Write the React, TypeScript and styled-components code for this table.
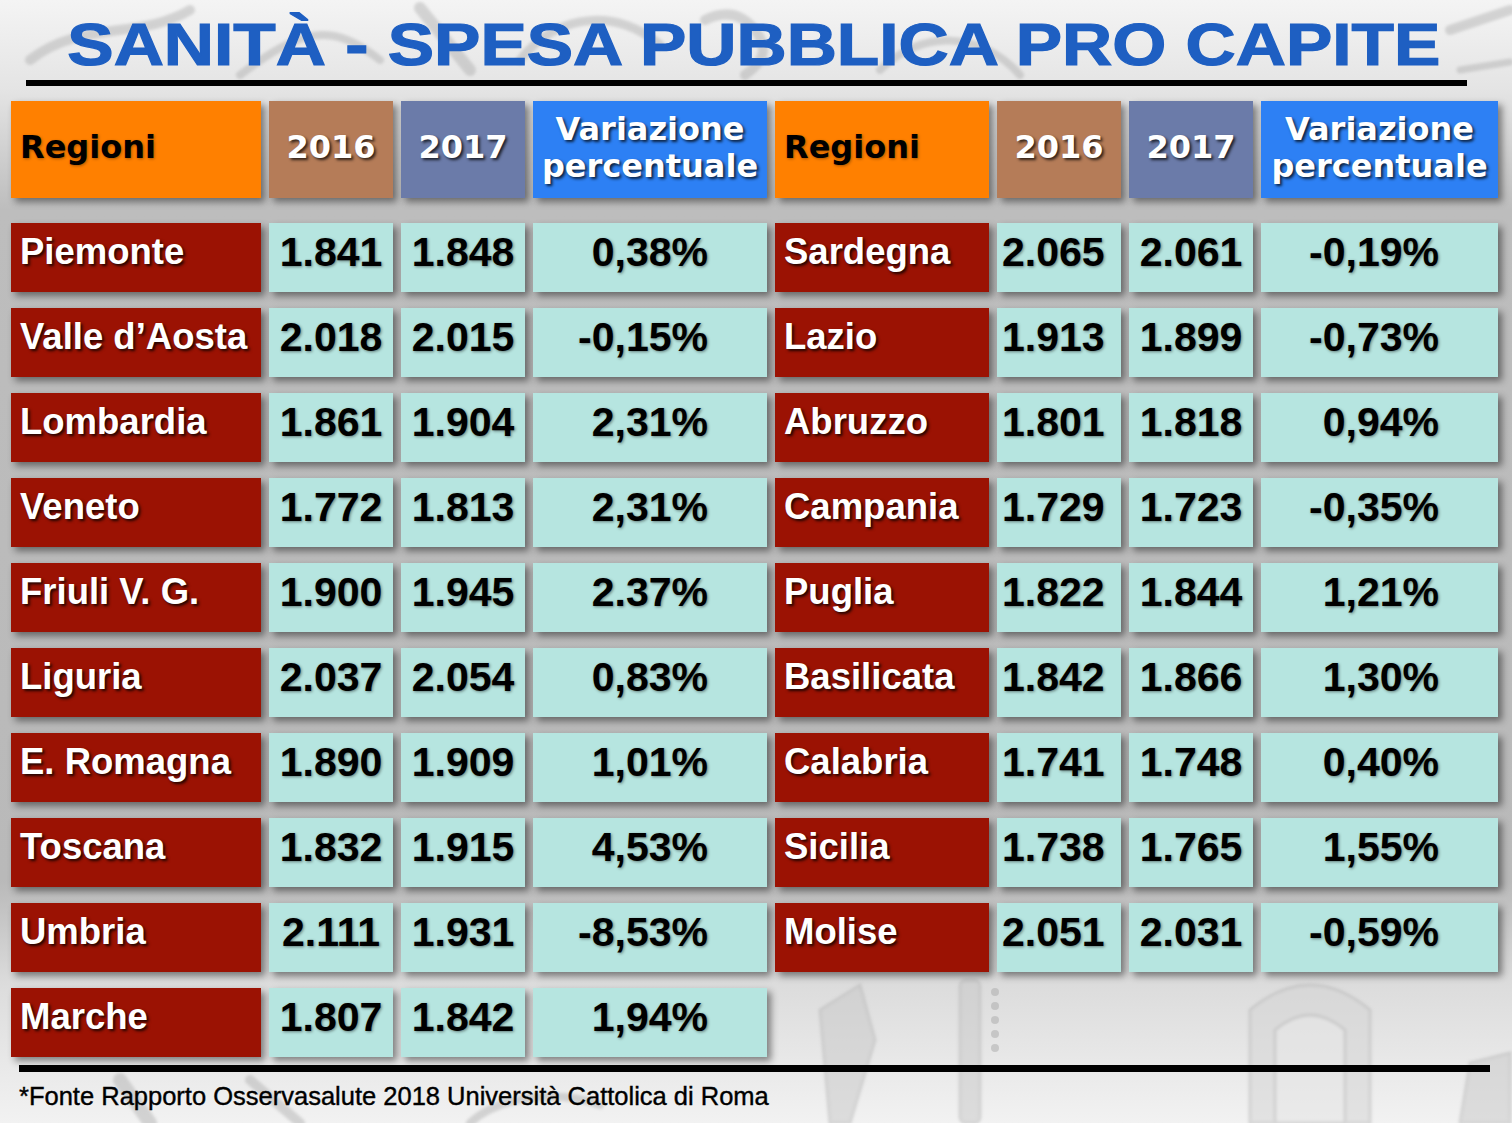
import React from "react";
import styled, { createGlobalStyle } from "styled-components";

const GlobalStyle = createGlobalStyle`
  html, body {
    margin: 0;
    padding: 0;
  }
  body {
    background: #e8e8e8;
  }
`;

const Page = styled.div`
  position: relative;
  width: 1512px;
  height: 1123px;
  overflow: hidden;
  background: linear-gradient(
    180deg,
    #f4f4f4 0px,
    #e4e4e4 90px,
    #bdbdbd 210px,
    #b9b9b9 880px,
    #dcdcdc 985px,
    #f2f2f2 1123px
  );
`;

const Backdrop = styled.svg`
  position: absolute;
  inset: 0;
  pointer-events: none;
`;

const Content = styled.div`
  position: relative;
  display: flex;
  flex-direction: column;
`;

const Title = styled.h1`
  margin: 15px 0 0;
  height: 59px;
  display: flex;
  justify-content: center;
  font: bold 60px/59px "Liberation Sans", Arial, sans-serif;
  color: #1e5fc2;
  white-space: nowrap;
`;

const TitleText = styled.span`
  display: inline-block;
  transform: translateX(-2px) scaleX(1.158);
  -webkit-text-stroke: 1.2px #1e5fc2;
`;

const Rule = styled.div<{ $left: number; $width: number; $thick: number; $top: number }>`
  margin: ${(p) => p.$top}px 0 0 ${(p) => p.$left}px;
  width: ${(p) => p.$width}px;
  height: ${(p) => p.$thick}px;
  background: #000;
`;

const Board = styled.div`
  display: grid;
  grid-template-columns: 250px 124px 124px 234px 214px 124px 124px 237px;
  grid-template-rows: 106px repeat(10, 69px);
  column-gap: 8px;
  row-gap: 16px;
  margin: 15px 0 0 11px;
`;

const HeadCell = styled.div<{ $bg: string; $ink: string; $start?: boolean }>`
  height: 97px;
  align-self: start;
  box-sizing: border-box;
  display: flex;
  align-items: center;
  justify-content: ${(p) => (p.$start ? "flex-start" : "center")};
  padding: 0 9px 4px;
  background: ${(p) => p.$bg};
  color: ${(p) => p.$ink};
  font: bold 32px/37px "DejaVu Sans", sans-serif;
  text-align: center;
  text-shadow: ${(p) =>
    p.$ink === "#fff"
      ? "2px 2px 3px rgba(0, 0, 0, 0.75)"
      : "1px 1px 3px rgba(0, 0, 0, 0.35)"};
  box-shadow: 4px 4px 7px rgba(0, 0, 0, 0.45);
`;

const NameCell = styled.div`
  box-sizing: border-box;
  display: flex;
  align-items: center;
  padding: 0 0 10px 9px;
  background: #9b1203;
  color: #fff;
  font: bold 36.5px/1 "Liberation Sans", Arial, sans-serif;
  white-space: nowrap;
  text-shadow: 2px 2px 3px rgba(0, 0, 0, 0.8);
  box-shadow: 4px 4px 7px rgba(0, 0, 0, 0.45);
`;

type Align = "center" | "start" | "end";

const ValueCell = styled.div<{ $align?: Align }>`
  box-sizing: border-box;
  display: flex;
  align-items: center;
  justify-content: ${(p) =>
    p.$align === "end" ? "flex-end" : p.$align === "start" ? "flex-start" : "center"};
  padding: 0 ${(p) => (p.$align === "end" ? 59 : 0)}px 10px
    ${(p) => (p.$align === "start" ? 5 : 0)}px;
  background: #b6e5e0;
  color: #000;
  font: bold 41px/1 "Liberation Sans", Arial, sans-serif;
  white-space: nowrap;
  text-shadow: 1px 1px 3px rgba(0, 0, 0, 0.45);
  box-shadow: 4px 4px 7px rgba(0, 0, 0, 0.45);
`;

const Source = styled.p`
  margin: 12px 0 0 19px;
  font: 25.5px/1 "Liberation Sans", Arial, sans-serif;
  color: #000;
  -webkit-text-stroke: 0.4px #000;
  white-space: nowrap;
`;

type Row = [string, string, string, string];

const north: Row[] = [
  ["Piemonte", "1.841", "1.848", "0,38%"],
  ["Valle d’Aosta", "2.018", "2.015", "-0,15%"],
  ["Lombardia", "1.861", "1.904", "2,31%"],
  ["Veneto", "1.772", "1.813", "2,31%"],
  ["Friuli V. G.", "1.900", "1.945", "2.37%"],
  ["Liguria", "2.037", "2.054", "0,83%"],
  ["E. Romagna", "1.890", "1.909", "1,01%"],
  ["Toscana", "1.832", "1.915", "4,53%"],
  ["Umbria", "2.111", "1.931", "-8,53%"],
  ["Marche", "1.807", "1.842", "1,94%"],
];

const south: Row[] = [
  ["Sardegna", "2.065", "2.061", "-0,19%"],
  ["Lazio", "1.913", "1.899", "-0,73%"],
  ["Abruzzo", "1.801", "1.818", "0,94%"],
  ["Campania", "1.729", "1.723", "-0,35%"],
  ["Puglia", "1.822", "1.844", "1,21%"],
  ["Basilicata", "1.842", "1.866", "1,30%"],
  ["Calabria", "1.741", "1.748", "0,40%"],
  ["Sicilia", "1.738", "1.765", "1,55%"],
  ["Molise", "2.051", "2.031", "-0,59%"],
];

const HeaderGroup = () => (
  <>
    <HeadCell $bg="#ff8000" $ink="#000" $start>
      Regioni
    </HeadCell>
    <HeadCell $bg="#b57c58" $ink="#fff">
      2016
    </HeadCell>
    <HeadCell $bg="#6b7ba9" $ink="#fff">
      2017
    </HeadCell>
    <HeadCell $bg="#2d80f4" $ink="#fff">
      Variazione
      <br />
      percentuale
    </HeadCell>
  </>
);

const DataGroup = ({ row, east }: { row: Row; east?: boolean }) => (
  <>
    <NameCell>{row[0]}</NameCell>
    <ValueCell $align={east ? "start" : "center"}>{row[1]}</ValueCell>
    <ValueCell>{row[2]}</ValueCell>
    <ValueCell $align="end">{row[3]}</ValueCell>
  </>
);

const Texture = () => (
  <Backdrop width="1512" height="1123" viewBox="0 0 1512 1123">
    <defs>
      <filter id="soft">
        <feGaussianBlur stdDeviation="1.6" />
      </filter>
    </defs>
    <g filter="url(#soft)" fill="none" stroke="#a4a4a4" strokeLinecap="round" opacity="0.4">
      <path d="M30 60 C 80 20, 140 40, 190 10" strokeWidth="10" />
      <path d="M240 75 C 300 30, 330 20, 380 60" strokeWidth="8" />
      <path d="M420 8 L 470 70" strokeWidth="12" />
      <path d="M520 60 C 560 10, 620 10, 660 45" strokeWidth="9" />
      <path d="M705 20 q 30 -15 50 10 q 20 25 -10 45" strokeWidth="10" />
      <path d="M880 70 C 920 30, 980 30, 1020 75" strokeWidth="8" />
      <path d="M1450 30 l 60 -20" strokeWidth="10" />
      <path d="M1460 70 l 50 -8" strokeWidth="7" />
      <path d="M150 1123 L 120 1080" strokeWidth="14" />
      <path d="M300 1123 L 250 1080" strokeWidth="10" />
      <path d="M470 1123 C 500 1095, 560 1090, 600 1105" strokeWidth="8" />
    </g>
    <g filter="url(#soft)" fill="#c8c8c8" stroke="#b4b4b4" strokeWidth="3" opacity="0.5">
      <path d="M830 1123 L 820 1010 L 860 985 L 875 1040 L 850 1123 Z" />
      <rect x="960" y="980" width="20" height="143" rx="6" />
      <path d="M1250 1123 V 1010 Q 1310 960 1370 1010 V 1123 Z" fill="#d4d4d4" />
      <path d="M1275 1123 V 1030 Q 1310 1000 1345 1030 V 1123 Z" fill="#e4e4e4" />
      <path d="M1460 1123 l 10 -60 l 40 -10 v 70 Z" />
    </g>
    <g fill="#aaaaaa" opacity="0.5">
      <circle cx="995" cy="992" r="4" />
      <circle cx="995" cy="1006" r="4" />
      <circle cx="995" cy="1020" r="4" />
      <circle cx="995" cy="1034" r="4" />
      <circle cx="995" cy="1048" r="4" />
    </g>
  </Backdrop>
);

export default function App() {
  return (
    <>
      <GlobalStyle />
      <Page>
        <Texture />
        <Content>
          <Title>
            <TitleText>SANITÀ - SPESA PUBBLICA PRO CAPITE</TitleText>
          </Title>
          <Rule $top={6} $left={26} $width={1441} $thick={6} />
          <Board>
            <HeaderGroup />
            <HeaderGroup />
            {north.map((row, i) => (
              <React.Fragment key={row[0]}>
                <DataGroup row={row} />
                {south[i] && <DataGroup row={south[i]} east />}
              </React.Fragment>
            ))}
          </Board>
          <Rule $top={8} $left={19} $width={1471} $thick={7} />
          <Source>*Fonte Rapporto Osservasalute 2018 Università Cattolica di Roma</Source>
        </Content>
      </Page>
    </>
  );
}
